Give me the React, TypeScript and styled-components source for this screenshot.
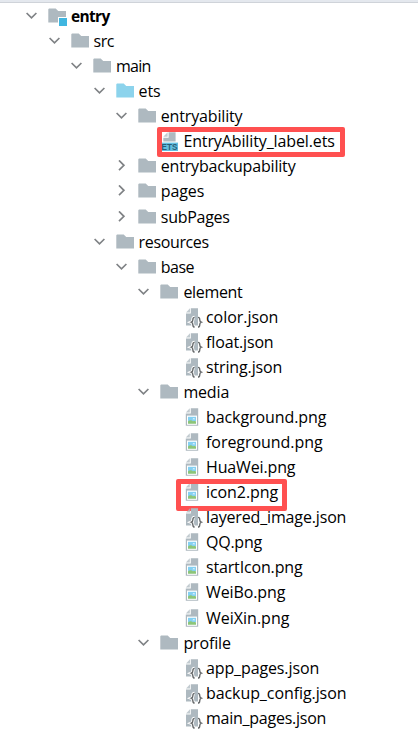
import React from "react";
import styled, { createGlobalStyle } from "styled-components";

const GlobalStyle = createGlobalStyle`
  body {
    margin: 0;
    background: #ffffff;
  }
`;

const Panel = styled.main`
  height: 735px;
  overflow: hidden;
  background: #ffffff;
  color: #000000;
  font-family: "Open Sans", "Noto Sans", sans-serif;
  font-size: 16px;
`;

const TopEdge = styled.div`
  box-sizing: border-box;
  height: 3px;
  background: #e4e8ee;
  border-bottom: 1px solid #cfd3d9;
`;

const Tree = styled.ul`
  list-style: none;
  margin: 0;
  padding: 1px 0 0;
`;

const Row = styled.li<{ $indent: number; $tall?: boolean }>`
  box-sizing: border-box;
  display: flex;
  align-items: flex-end;
  height: ${(p) => (p.$tall ? 26 : 25)}px;
  padding-left: ${(p) => p.$indent}px;
  position: relative;
`;

const ChevronSlot = styled.span`
  display: flex;
  align-items: center;
  justify-content: center;
  flex: none;
  width: 11px;
  height: 23px;
  margin-right: 11px;
  margin-bottom: 2px;
`;

const IconSlot = styled.span`
  flex: none;
  width: 20px;
  height: 25px;
  margin-right: 3px;
  svg {
    display: block;
    overflow: visible;
  }
`;

const Label = styled.span<{ $spacing: number; $bold?: boolean }>`
  flex: none;
  height: 25px;
  line-height: 25px;
  white-space: pre;
  font-weight: ${(p) => (p.$bold ? 700 : 400)};
  font-size: ${(p) => (p.$bold ? 15.5 : 16)}px;
  letter-spacing: ${(p) => p.$spacing}px;
`;

const Highlight = styled.span<{ $left: number; $top: number; $width: number; $height: number }>`
  box-sizing: border-box;
  position: absolute;
  left: ${(p) => p.$left}px;
  top: ${(p) => p.$top}px;
  width: ${(p) => p.$width}px;
  height: ${(p) => p.$height}px;
  border: 5px solid #ff5050;
  border-radius: 2px;
`;

const Chevron = ({ open }: { open: boolean }) => (
  <svg width="11" height="11" viewBox="0 0 11 11" fill="none" stroke="#7f8285" strokeWidth="1.7">
    {open ? <path d="M0.6 3L5.5 7.8L10.4 3" /> : <path d="M3 0.4L7.9 5.3L3 10.2" />}
  </svg>
);

const Folder = ({ color, module }: { color: string; module?: boolean }) => (
  <svg width="20" height="22" viewBox="0 0 20 22">
    <path d="M0.3 5.2L1 4.4H7.7L10.2 7H18V18.4H0.3Z" fill={color} />
    {module && (
      <>
        <rect x="10" y="13" width="9" height="6" fill="#ffffff" />
        <rect x="11" y="14" width="8" height="8" fill="#40b6e0" />
      </>
    )}
  </svg>
);

const BRACES =
  "M11.6 12.4C10.1 12.4 9.9 13.1 9.9 14.5C9.9 16.1 9.6 16.7 8.3 17.2C9.6 17.7 9.9 18.3 9.9 19.9C9.9 21.3 10.1 22 11.6 22M15 12.4C16.5 12.4 16.7 13.1 16.7 14.5C16.7 16.1 17 16.7 18.3 17.2C17 17.7 16.7 18.3 16.7 19.9C16.7 21.3 16.5 22 15 22";

const JsonFile = () => (
  <svg width="20" height="22" viewBox="0 0 20 22">
    <path d="M7.8 3.2H15V20.6H3V8.6H7.8Z" fill="#aeb9c0" />
    <path d="M3 7.6L7 3.2V7.6Z" fill="#aeb9c0" opacity="0.75" />
    <path d={BRACES} fill="none" stroke="#ffffff" strokeWidth="3.2" />
    <path d={BRACES} fill="none" stroke="#66696b" strokeWidth="1.4" />
  </svg>
);

const ImageFile = () => (
  <svg width="20" height="22" viewBox="0 0 20 22">
    <path d="M7.8 3.3H15.2V20.8H2.8V8.6H7.8Z" fill="#aeb9c0" />
    <path d="M2.8 7.6L6.8 3.3V7.6Z" fill="#aeb9c0" opacity="0.75" />
    <rect x="4" y="10.6" width="10" height="9.2" fill="#ffffff" />
    <rect x="5" y="11.8" width="8" height="4.4" fill="#84d0f2" />
    <path d="M9.4 14.3C10 12.9 11.6 12.9 12.2 14.3Z" fill="#ffffff" />
    <path d="M5 16.3C7 14.6 8.5 14.9 10 16.3C11 15.9 12 15.9 13 16.5V18.7H5Z" fill="#8cc579" />
  </svg>
);

const EtsText = styled.text`
  font: 700 8.8px "Liberation Sans", sans-serif;
  fill: #2a5f78;
`;

const EtsFile = () => (
  <svg width="20" height="22" viewBox="0 0 20 22">
    <path d="M8.6 3.3H15.6V12.6H3.3V8.7H8.6Z" fill="#aeb9c0" />
    <path d="M3.3 7.7L7.6 3.3V7.7Z" fill="#aeb9c0" opacity="0.75" />
    <rect x="1" y="13.6" width="17" height="8.4" fill="#62bee0" />
    <EtsText x="1.6" y="21" textLength="15.8" lengthAdjust="spacingAndGlyphs">
      ETS
    </EtsText>
  </svg>
);

type Kind = "module" | "folder" | "source" | "json" | "image" | "ets";

const ICONS: Record<Kind, React.ReactElement> = {
  module: <Folder color="#aeb9c0" module />,
  folder: <Folder color="#aeb9c0" />,
  source: <Folder color="#8cd3ec" />,
  json: <JsonFile />,
  image: <ImageFile />,
  ets: <EtsFile />,
};

// Left edge of the chevron column at each nesting level.
const INDENTS = [26, 48.6, 71, 93.6, 115.8, 138.4, 161];

interface Node {
  name: string;
  depth: number;
  kind: Kind;
  spacing: number;
  open?: boolean;
  tall?: boolean;
  mark?: [number, number, number, number];
}

const NODES: Node[] = [
  { name: "entry", depth: 0, kind: "module", spacing: -0.65, open: true },
  { name: "src", depth: 1, kind: "folder", spacing: -0.5, open: true },
  { name: "main", depth: 2, kind: "folder", spacing: -0.75, open: true },
  { name: "ets", depth: 3, kind: "source", spacing: -0.1, open: true },
  { name: "entryability", depth: 4, kind: "folder", spacing: -0.16, open: true },
  { name: "EntryAbility_label.ets", depth: 5, kind: "ets", spacing: -0.12, mark: [157, -2, 188, 30] },
  { name: "entrybackupability", depth: 4, kind: "folder", spacing: -0.18, open: false },
  { name: "pages", depth: 4, kind: "folder", spacing: -0.1, open: false },
  { name: "subPages", depth: 4, kind: "folder", spacing: -0.28, open: false, tall: true },
  { name: "resources", depth: 3, kind: "folder", spacing: -0.36, open: true },
  { name: "base", depth: 4, kind: "folder", spacing: -0.5, open: true },
  { name: "element", depth: 5, kind: "folder", spacing: -0.33, open: true },
  { name: "color.json", depth: 6, kind: "json", spacing: -0.05 },
  { name: "float.json", depth: 6, kind: "json", spacing: -0.14 },
  { name: "string.json", depth: 6, kind: "json", spacing: -0.14 },
  { name: "media", depth: 5, kind: "folder", spacing: -0.16, open: true },
  { name: "background.png", depth: 6, kind: "image", spacing: -0.08 },
  { name: "foreground.png", depth: 6, kind: "image", spacing: -0.05 },
  { name: "HuaWei.png", depth: 6, kind: "image", spacing: -0.14 },
  { name: "icon2.png", depth: 6, kind: "image", spacing: -0.07, mark: [176, -1, 111, 32] },
  { name: "layered_image.json", depth: 6, kind: "json", spacing: -0.15 },
  { name: "QQ.png", depth: 6, kind: "image", spacing: -0.25 },
  { name: "startIcon.png", depth: 6, kind: "image", spacing: -0.16 },
  { name: "WeiBo.png", depth: 6, kind: "image", spacing: -0.1 },
  { name: "WeiXin.png", depth: 6, kind: "image", spacing: 0, tall: true },
  { name: "profile", depth: 5, kind: "folder", spacing: -0.15, open: true },
  { name: "app_pages.json", depth: 6, kind: "json", spacing: -0.12 },
  { name: "backup_config.json", depth: 6, kind: "json", spacing: -0.08 },
  { name: "main_pages.json", depth: 6, kind: "json", spacing: -0.25 },
];

export default function App() {
  return (
    <Panel>
      <GlobalStyle />
      <TopEdge />
      <Tree>
        {NODES.map((n) => (
          <Row key={n.name} $indent={INDENTS[n.depth]} $tall={n.tall}>
            <ChevronSlot>{n.open !== undefined && <Chevron open={n.open} />}</ChevronSlot>
            <IconSlot>{ICONS[n.kind]}</IconSlot>
            <Label $spacing={n.spacing} $bold={n.kind === "module"}>
              {n.name}
            </Label>
            {n.mark && (
              <Highlight $left={n.mark[0]} $top={n.mark[1]} $width={n.mark[2]} $height={n.mark[3]} />
            )}
          </Row>
        ))}
      </Tree>
    </Panel>
  );
}
